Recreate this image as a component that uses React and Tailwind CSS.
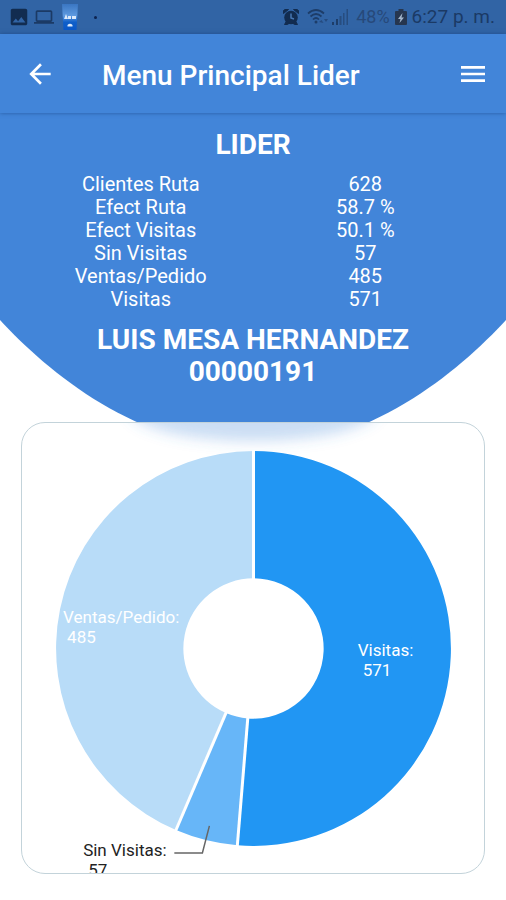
import { MdArrowBack, MdMenu, MdImage, MdLaptop } from 'react-icons/md';

const stats = [
  ['Clientes Ruta', '628'],
  ['Efect Ruta', '58.7 %'],
  ['Efect Visitas', '50.1 %'],
  ['Sin Visitas', '57'],
  ['Ventas/Pedido', '485'],
  ['Visitas', '571'],
];

const slices = [
  { name: 'Visitas', value: 571, color: '#2196f3' },
  { name: 'Sin Visitas', value: 57, color: '#67b6f8' },
  { name: 'Ventas/Pedido', value: 485, color: '#b8dcf8' },
];

const CX = 231;
const CY = 225;
const OUTER = 197;
const INNER = 70;

function point(radius, angle) {
  return `${CX + radius * Math.sin(angle)} ${CY - radius * Math.cos(angle)}`;
}

function buildArcs() {
  const total = slices.reduce((sum, s) => sum + s.value, 0);
  let start = 0;
  return slices.map((s) => {
    const end = start + (s.value / total) * Math.PI * 2;
    const large = end - start > Math.PI ? 1 : 0;
    const d = `M${point(OUTER, start)} A${OUTER} ${OUTER} 0 ${large} 1 ${point(OUTER, end)} L${point(INNER, end)} A${INNER} ${INNER} 0 ${large} 0 ${point(INNER, start)} Z`;
    const arc = { ...s, d, edge: `M${point(INNER - 1, start)} L${point(OUTER + 1, start)}` };
    start = end;
    return arc;
  });
}

function AlarmIcon() {
  return (
    <svg viewBox="0 0 18 18" className="h-[18px] w-[18px]" aria-hidden="true">
      <circle cx="9" cy="9.500" r="6.800" fill="#122c50" />
      <path d="M1.500 5.500V2.500L3 1.500h3.500zM16.500 5.500V2.500L15 1.500h-3.500zM4.500 13l-2 3.500h3l2-1.500zM13.500 13l2 3.500h-3l-2-1.500z" fill="#122c50" stroke="#122c50" strokeLinejoin="round" />
      <path d="M9 5.500v4.500l3 1" fill="none" stroke="#4777b3" strokeWidth="1.500" />
    </svg>
  );
}

function WifiIcon() {
  return (
    <svg viewBox="0 0 22 18" className="h-[18px] w-[22px]" aria-hidden="true">
      <g fill="none" stroke="#1d3d69" strokeWidth="1.700">
        <path d="M1 5.500Q9 -1.500 17 5.500" />
        <path d="M3.500 8.500Q9 3.500 14.500 8.500" />
        <path d="M6 11.500Q9 8.500 12 11.500" />
      </g>
      <circle cx="9" cy="14" r="1.500" fill="#1d3d69" />
      <path d="M12 14l2.500-2 2 3zM17 11h4l-2 3z" fill="#254b7f" />
    </svg>
  );
}

function SignalIcon() {
  return (
    <svg viewBox="0 0 18 18" className="h-[18px] w-[18px]" aria-hidden="true">
      <path d="M1 14h2v3H1zM5 11h2v6H5z" fill="#1d3d69" />
      <path d="M8.500 8h2v9h-2zM12 5h1.500v12H12zM15.500 1h1.500v16h-1.500z" fill="#274d80" />
    </svg>
  );
}

function BatteryIcon() {
  return (
    <svg viewBox="0 0 12 18" className="h-[18px] w-3" aria-hidden="true">
      <path d="M3.500 1h5v2H11a1 1 0 0 1 1 1v12a1 1 0 0 1-1 1H1a1 1 0 0 1-1-1V4a1 1 0 0 1 1-1h2.500z" fill="#26364f" />
      <path d="M7.500 5L3 11h2.500l-1 4L9 9.500H6.500z" fill="#a3b5cb" />
    </svg>
  );
}

function AppBadge() {
  return (
    <svg viewBox="0 0 16 28" className="h-7 w-4" aria-hidden="true">
      <defs>
        <linearGradient id="badge" x1="0" y1="0" x2="0" y2="1">
          <stop offset="0" stopColor="#3a76c2" />
          <stop offset="0.450" stopColor="#5e9ae0" />
          <stop offset="0.700" stopColor="#0f5fc9" />
          <stop offset="1" stopColor="#0a58c8" />
        </linearGradient>
      </defs>
      <path d="M0 1h16l-1.500 26h-13z" fill="url(#badge)" />
      <path d="M2 16l2-5 2 5zM6 16v-3h3v3zM10 16v-3h4v3zM5.500 22q2.500-2.500 5 0v1.500h-5z" fill="#dbe9fa" />
    </svg>
  );
}

function StatusBar() {
  return (
    <div className="flex h-[34px] items-center justify-between whitespace-nowrap bg-[#3164a5] pl-2 pr-[11px] text-[#1b3a65]">
      <div className="flex items-center">
        <MdImage className="h-[22px] w-[22px] text-[#122c50]" />
        <MdLaptop className="ml-1 h-5 w-5" />
        <span className="ml-2">
          <AppBadge />
        </span>
        <span className="ml-4 h-[3px] w-[3px] rounded-full bg-[#0d2350]" />
      </div>
      <div className="flex items-center">
        <AlarmIcon />
        <span className="ml-[7px]"><WifiIcon /></span>
        <span className="ml-[2px]"><SignalIcon /></span>
        <span className="ml-[7px] text-lg text-[#27497a]">48%</span>
        <span className="ml-[5px]"><BatteryIcon /></span>
        <span className="ml-[5px] text-[19px]">6:27 p. m.</span>
      </div>
    </div>
  );
}

function Donut() {
  const arcs = buildArcs();
  return (
    <svg viewBox="0 0 461 449" className="block w-full" role="img" aria-label="Visitas, Sin Visitas, Ventas/Pedido">
      <defs>
        <filter id="soft" x="-20%" y="-50%" width="140%" height="200%">
          <feGaussianBlur stdDeviation="7" />
        </filter>
      </defs>
      <ellipse cx="231" cy="-14" rx="124" ry="32" fill="#4285d9" fillOpacity="0.280" filter="url(#soft)" />
      {arcs.map((a) => (
        <path key={a.name} d={a.d} fill={a.color} />
      ))}
      {arcs.map((a) => (
        <path key={a.name} d={a.edge} stroke="#ffffff" strokeWidth="3" />
      ))}
      <path d="M152 429h28l7-27" fill="none" stroke="#666666" strokeWidth="1.500" />
      <g fontSize="17">
        <text x="41" y="200" fill="#ffffff">Ventas/Pedido:</text>
        <text x="45" y="220" fill="#ffffff">485</text>
        <text x="335" y="232" fill="#ffffff">Visitas:</text>
        <text x="340" y="252" fill="#ffffff">571</text>
        <text x="61" y="432" fill="#222222">Sin Visitas:</text>
        <text x="66" y="452" fill="#222222">57</text>
      </g>
    </svg>
  );
}

export default function App() {
  return (
    <div className="min-h-screen bg-white pb-[26px] font-[Roboto,sans-serif]">
      <StatusBar />
      <header className="relative flex h-[79px] items-center bg-[#4285d9] pl-6 pr-[17px] text-white shadow-[0_0_4px_rgba(20,60,120,0.6)]">
        <button type="button" aria-label="Volver">
          <MdArrowBack className="h-8 w-8" />
        </button>
        <h1 className="ml-[46px] flex-1 pt-1 text-[28px] font-medium leading-9">Menu Principal Lider</h1>
        <button type="button" aria-label="Menu">
          <MdMenu className="h-8 w-8" />
        </button>
      </header>
      <main>
        <section className="bg-[#4285d9] pt-3 text-center text-white">
          <h2 className="text-[28px] font-bold leading-10">LIDER</h2>
          <table className="mx-auto mt-2 w-[449px] max-w-full table-fixed text-[20px] leading-[23px]">
            <tbody>
              {stats.map(([label, value]) => (
                <tr key={label}>
                  <th scope="row" className="font-normal">{label}</th>
                  <td>{value}</td>
                </tr>
              ))}
            </tbody>
          </table>
        </section>
        <section className="relative">
          <svg viewBox="0 0 506 137" preserveAspectRatio="none" className="absolute inset-x-0 top-0 h-[137px] w-full" aria-hidden="true">
            <path d="M0 0H506V9C458 61 368 137 253 137S48 61 0 9Z" fill="#4285d9" />
          </svg>
          <div className="relative pt-[13px] text-center text-[28px] font-bold leading-8 text-white">
            <p>LUIS MESA HERNANDEZ</p>
            <p>00000191</p>
          </div>
          <div className="relative mx-[21px] mt-[34px] overflow-hidden rounded-[24px] border border-[#c3d3da] bg-white">
            <Donut />
          </div>
        </section>
      </main>
    </div>
  );
}
